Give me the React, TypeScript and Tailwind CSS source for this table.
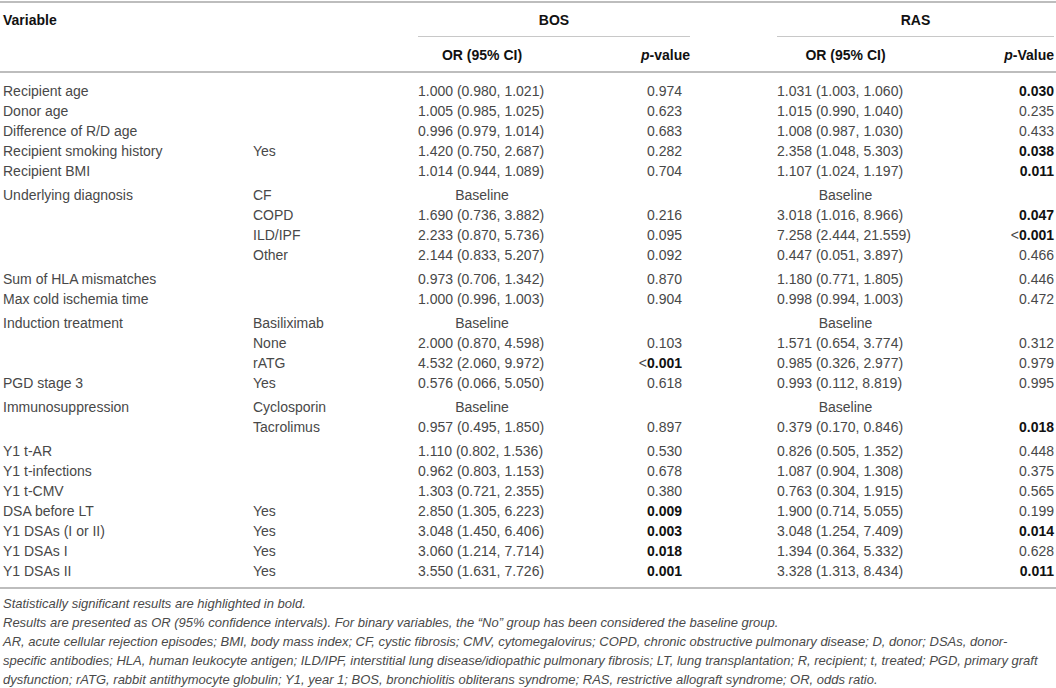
import React from "react";

type Row = [string, string, string, string, string, string];

const groups: Row[][] = [
  [
    ["Recipient age", "", "1.000 (0.980, 1.021)", "0.974", "1.031 (1.003, 1.060)", "*0.030"],
    ["Donor age", "", "1.005 (0.985, 1.025)", "0.623", "1.015 (0.990, 1.040)", "0.235"],
    ["Difference of R/D age", "", "0.996 (0.979, 1.014)", "0.683", "1.008 (0.987, 1.030)", "0.433"],
    ["Recipient smoking history", "Yes", "1.420 (0.750, 2.687)", "0.282", "2.358 (1.048, 5.303)", "*0.038"],
    ["Recipient BMI", "", "1.014 (0.944, 1.089)", "0.704", "1.107 (1.024, 1.197)", "*0.011"],
  ],
  [
    ["Underlying diagnosis", "CF", "Baseline", "", "Baseline", ""],
    ["", "COPD", "1.690 (0.736, 3.882)", "0.216", "3.018 (1.016, 8.966)", "*0.047"],
    ["", "ILD/IPF", "2.233 (0.870, 5.736)", "0.095", "7.258 (2.444, 21.559)", "<*0.001"],
    ["", "Other", "2.144 (0.833, 5.207)", "0.092", "0.447 (0.051, 3.897)", "0.466"],
  ],
  [
    ["Sum of HLA mismatches", "", "0.973 (0.706, 1.342)", "0.870", "1.180 (0.771, 1.805)", "0.446"],
    ["Max cold ischemia time", "", "1.000 (0.996, 1.003)", "0.904", "0.998 (0.994, 1.003)", "0.472"],
  ],
  [
    ["Induction treatment", "Basiliximab", "Baseline", "", "Baseline", ""],
    ["", "None", "2.000 (0.870, 4.598)", "0.103", "1.571 (0.654, 3.774)", "0.312"],
    ["", "rATG", "4.532 (2.060, 9.972)", "<*0.001", "0.985 (0.326, 2.977)", "0.979"],
    ["PGD stage 3", "Yes", "0.576 (0.066, 5.050)", "0.618", "0.993 (0.112, 8.819)", "0.995"],
  ],
  [
    ["Immunosuppression", "Cyclosporin", "Baseline", "", "Baseline", ""],
    ["", "Tacrolimus", "0.957 (0.495, 1.850)", "0.897", "0.379 (0.170, 0.846)", "*0.018"],
  ],
  [
    ["Y1 t-AR", "", "1.110 (0.802, 1.536)", "0.530", "0.826 (0.505, 1.352)", "0.448"],
    ["Y1 t-infections", "", "0.962 (0.803, 1.153)", "0.678", "1.087 (0.904, 1.308)", "0.375"],
    ["Y1 t-CMV", "", "1.303 (0.721, 2.355)", "0.380", "0.763 (0.304, 1.915)", "0.565"],
    ["DSA before LT", "Yes", "2.850 (1.305, 6.223)", "*0.009", "1.900 (0.714, 5.055)", "0.199"],
    ["Y1 DSAs (I or II)", "Yes", "3.048 (1.450, 6.406)", "*0.003", "3.048 (1.254, 7.409)", "*0.014"],
    ["Y1 DSAs I", "Yes", "3.060 (1.214, 7.714)", "*0.018", "1.394 (0.364, 5.332)", "0.628"],
    ["Y1 DSAs II", "Yes", "3.550 (1.631, 7.726)", "*0.001", "3.328 (1.313, 8.434)", "*0.011"],
  ],
];

function PVal({ v }: { v: string }) {
  if (v.startsWith("<*")) {
    return (
      <>
        {"<"}
        <b className="font-bold text-[#111]">{v.slice(2)}</b>
      </>
    );
  }
  if (v.startsWith("*")) {
    return <b className="font-bold text-[#111]">{v.slice(1)}</b>;
  }
  return <>{v}</>;
}

function ORCell({ v }: { v: string }) {
  if (v === "Baseline") return <div className="text-center">{v}</div>;
  return <div className="text-left whitespace-nowrap">{v}</div>;
}

const gridCols = "grid grid-cols-[250px_165px_128px_144px_87px_137px_140px]";

export default function App() {
  return (
    <div className="w-[1056px] h-[688px] bg-white overflow-hidden font-['Liberation_Sans',Arial,sans-serif] text-[#484848]">
      <div className="mt-[1px] border-t-2 border-b-2 border-[#bdbdbd] pl-[3px] pr-[2px]">
        <div className={`${gridCols} text-[14px] leading-[20px] font-bold text-[#111]`}>
          <div className="pt-[7px]">Variable</div>
          <div />
          <div className="col-span-2 text-center pt-[7px] pb-[6px] border-b border-[#c8c8c8]">BOS</div>
          <div />
          <div className="col-span-2 text-center pt-[7px] pb-[6px] border-b border-[#c8c8c8]">RAS</div>
          <div />
          <div />
          <div className="text-center pt-[8px] pb-[6px] whitespace-nowrap">OR (95% CI)</div>
          <div className="text-right pt-[8px] pb-[6px]">
            <i>p</i>-value
          </div>
          <div />
          <div className="text-center pt-[8px] pb-[6px] whitespace-nowrap">OR (95% CI)</div>
          <div className="text-right pt-[8px] pb-[6px]">
            <i>p</i>-Value
          </div>
        </div>
      </div>
      <div className="border-b-2 border-[#bdbdbd] pl-[3px] pr-[2px] pt-[8px] pb-[6px] flex flex-col gap-[4px]">
        {groups.map((g, gi) => (
          <div key={gi} className="flex flex-col">
            {g.map((r, ri) => (
              <div key={ri} className={`${gridCols} text-[14px] leading-[20px] h-[20px]`}>
                <div className="whitespace-nowrap">{r[0]}</div>
                <div className="whitespace-nowrap">{r[1]}</div>
                <ORCell v={r[2]} />
                <div className="text-right pr-[8px]">
                  <PVal v={r[3]} />
                </div>
                <div />
                <ORCell v={r[4]} />
                <div className="text-right">
                  <PVal v={r[5]} />
                </div>
              </div>
            ))}
          </div>
        ))}
      </div>
      <div className="mt-[5px] pl-[3px] italic text-[13px] leading-[19px] text-[#4a4a4a] whitespace-nowrap">
        <div>Statistically significant results are highlighted in bold.</div>
        <div>
          Results are presented as OR (95% confidence intervals). For binary variables, the “No” group has been considered the baseline group.
        </div>
        <div>
          AR, acute cellular rejection episodes; BMI, body mass index; CF, cystic fibrosis; CMV, cytomegalovirus; COPD, chronic obstructive pulmonary disease; D, donor; DSAs, donor-
        </div>
        <div>
          specific antibodies; HLA, human leukocyte antigen; ILD/IPF, interstitial lung disease/idiopathic pulmonary fibrosis; LT, lung transplantation; R, recipient; t, treated; PGD, primary graft
        </div>
        <div>
          dysfunction; rATG, rabbit antithymocyte globulin; Y1, year 1; BOS, bronchiolitis obliterans syndrome; RAS, restrictive allograft syndrome; OR, odds ratio.
        </div>
      </div>
    </div>
  );
}
